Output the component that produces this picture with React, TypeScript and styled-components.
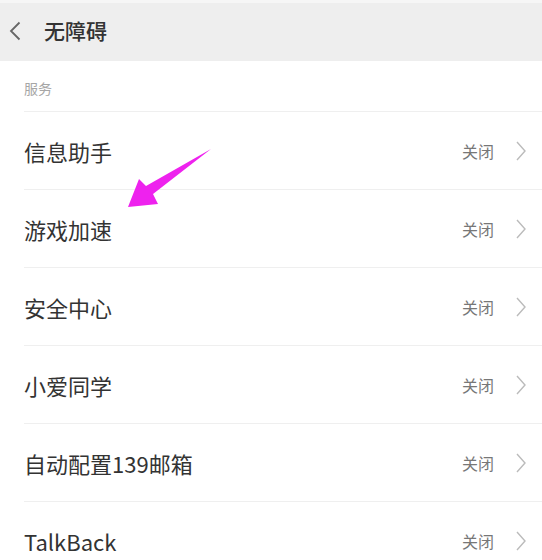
import React from 'react';
import styled, { createGlobalStyle } from 'styled-components';

const GlobalStyle = createGlobalStyle`
  html, body {
    margin: 0;
    padding: 0;
    background: #fff;
  }
  body {
    font-family: "Noto Sans CJK SC", "Noto Sans", sans-serif;
    overflow: hidden;
  }
`;

const Page = styled.div`
  position: relative;
  width: 542px;
  height: 560px;
  overflow: hidden;
  background: #fff;
`;

const Header = styled.header`
  height: 58px;
  border-top: 3px solid #f6f6f6;
  background: #eeeeee;
  display: flex;
  align-items: center;
  padding-left: 9px;
  gap: 23px;
`;

const BackIcon = styled.svg`
  width: 12px;
  height: 20px;
  margin-top: -2px;
`;

const Title = styled.h1`
  margin: 0;
  font-size: 21px;
  font-weight: 500;
  color: #333;
  margin-top: -4px;
`;

const SectionLabel = styled.div`
  height: 51px;
  margin-left: 24px;
  display: flex;
  align-items: center;
  font-size: 14px;
  color: #a6a6a6;
  border-bottom: 1px solid #efefef;
  padding-top: 3px;
  box-sizing: border-box;
`;

const List = styled.ul`
  list-style: none;
  margin: 0;
  padding: 0;
`;

const Row = styled.li`
  height: 77px;
  margin-left: 24px;
  display: flex;
  align-items: center;
  border-bottom: 1px solid #efefef;
  padding-right: 16px;
`;

const Label = styled.span`
  flex: 1;
  font-size: 22px;
  color: #333;
`;

const Status = styled.span`
  font-size: 16px;
  color: #777;
  margin-right: 22px;
`;

const Chevron = styled.svg`
  width: 10px;
  height: 20px;
`;

const Arrow = styled.svg`
  position: absolute;
  left: 0;
  top: 0;
  pointer-events: none;
`;

const items = ['信息助手', '游戏加速', '安全中心', '小爱同学', '自动配置139邮箱', 'TalkBack'];

const App: React.FC = () => {
  return (
    <Page>
      <GlobalStyle />
      <Header>
        <BackIcon viewBox="0 0 12 20">
          <path d="M10.5 1.5 L2 10 L10.5 18.5" fill="none" stroke="#666" strokeWidth="1.8" />
        </BackIcon>
        <Title>无障碍</Title>
      </Header>
      <SectionLabel>服务</SectionLabel>
      <List>
        {items.map((item) => (
          <Row key={item}>
            <Label>{item}</Label>
            <Status>关闭</Status>
            <Chevron viewBox="0 0 10 20">
              <path d="M1 1 L9 10 L1 19" fill="none" stroke="#bbb" strokeWidth="1.4" />
            </Chevron>
          </Row>
        ))}
      </List>
      <Arrow width="542" height="560" viewBox="0 0 542 560">
        <polygon
          points="211,149 153,194 158,204 128,207 139,179 146,186"
          fill="#ee22ee"
        />
      </Arrow>
    </Page>
  );
};

export default App;
